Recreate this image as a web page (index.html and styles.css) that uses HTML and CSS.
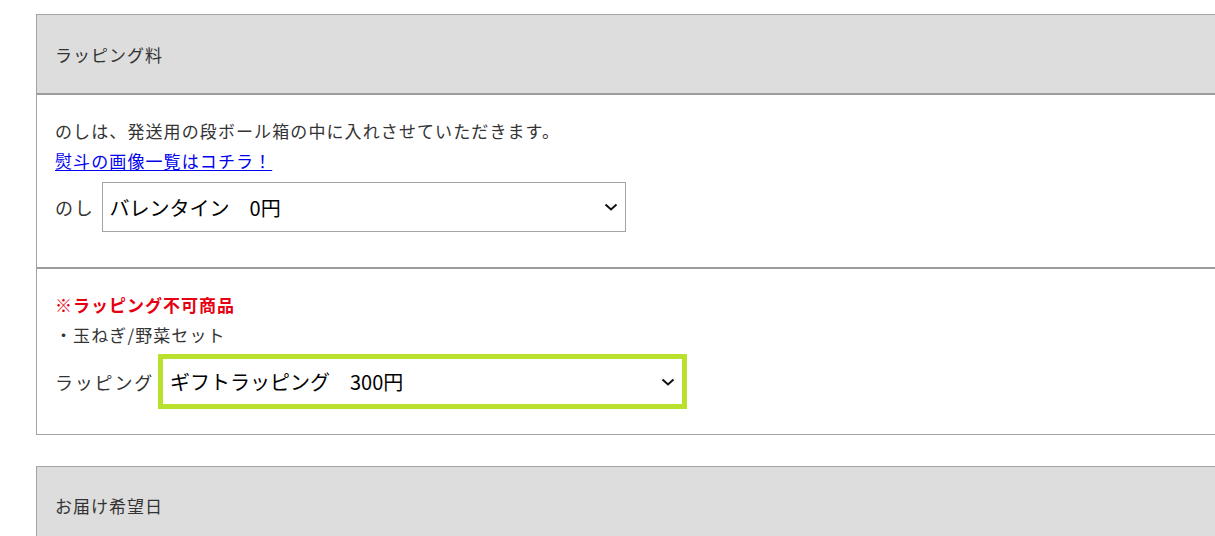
FILE: index.html
```html
<!DOCTYPE html>
<html lang="ja">
<head>
<meta charset="utf-8">
<title>ラッピング料</title>
<link rel="stylesheet" href="styles.css">
</head>
<body>
<div class="page">
  <section class="box">
    <div class="box-head">ラッピング料</div>
    <div class="box-sec sec-noshi">
      <p class="line">のしは、発送用の段ボール箱の中に入れさせていただきます。</p>
      <p class="line"><a href="#" class="link">熨斗の画像一覧はコチラ！</a></p>
      <div class="field">
        <label class="field-label" for="noshi">のし</label>
        <select id="noshi" class="sel sel-noshi">
          <option>バレンタイン　0円</option>
        </select>
      </div>
    </div>
    <div class="box-sec sec-wrap">
      <p class="line warn">※ラッピング不可商品</p>
      <p class="line">・玉ねぎ/野菜セット</p>
      <div class="field field-wrap">
        <label class="field-label" for="wrap">ラッピング</label>
        <select id="wrap" class="sel sel-wrap">
          <option>ギフトラッピング　300円</option>
        </select>
      </div>
    </div>
  </section>
  <section class="box box-second">
    <div class="box-head">お届け希望日</div>
  </section>
</div>
</body>
</html>
```

FILE: styles.css
```css
html, body {
  margin: 0;
  padding: 0;
  background: #fff;
  overflow: hidden;
}
body {
  font-family: "Noto Sans CJK JP", "Noto Sans", sans-serif;
  color: #333;
  font-size: 17px;
}
.page {
  padding: 14px 0 0 36px;
}
.box {
  border: 1px solid #a3a3a3;
  border-right: none;
  margin-right: -20px;
}
.box-second {
  margin-top: 31px;
}
.box-head {
  background: #dddddd;
  height: 78px;
  display: flex;
  align-items: center;
  padding-left: 18px;
  letter-spacing: 1px;
  border-bottom: 2px solid #9c9c9c;
  line-height: 1;
}
.box-second .box-head {
  border-bottom: none;
  height: 76px;
}
.box-sec {
  padding: 21px 0 0 18px;
}
.sec-noshi {
  padding-bottom: 35px;
  border-bottom: 2px solid #9c9c9c;
}
.sec-wrap {
  padding-bottom: 25px;
}
.line {
  margin: 0;
  line-height: 30px;
  letter-spacing: 1.1px;
}
.link {
  color: #0000ee;
  text-decoration: underline;
  text-underline-offset: 2px;
}
.warn {
  color: #e60012;
  font-weight: 700;
  letter-spacing: 1px;
}
.field {
  display: flex;
  align-items: center;
  gap: 7px;
  margin-top: 6px;
}
.field-wrap {
  margin-top: 4px;
  gap: 4px;
}
.field-label {
  font-size: 18px;
  letter-spacing: 0.1em;
  color: #333;
}
.sel {
  -webkit-appearance: none;
  appearance: none;
  font-family: "Noto Sans CJK JP", "Noto Sans", sans-serif;
  font-size: 20px;
  color: #000;
  background-color: #fff;
  background-image: url("data:image/svg+xml;utf8,<svg xmlns='http://www.w3.org/2000/svg' width='14' height='8' viewBox='0 0 14 8'><path d='M1.5 1.5 L7 6.5 L12.5 1.5' fill='none' stroke='%23111' stroke-width='2'/></svg>");
  background-repeat: no-repeat;
  border-radius: 0;
  margin: 0;
  outline: none;
}
.sel-noshi {
  width: 524px;
  height: 50px;
  border: 1px solid #a3a3a3;
  padding: 0 30px 0 7px;
  background-position: right 7px center;
}
.sel-wrap {
  width: 529px;
  height: 55px;
  border: 5px solid #b8e02c;
  padding: 0 30px 0 7px;
  background-position: right 7px center;
}
```
